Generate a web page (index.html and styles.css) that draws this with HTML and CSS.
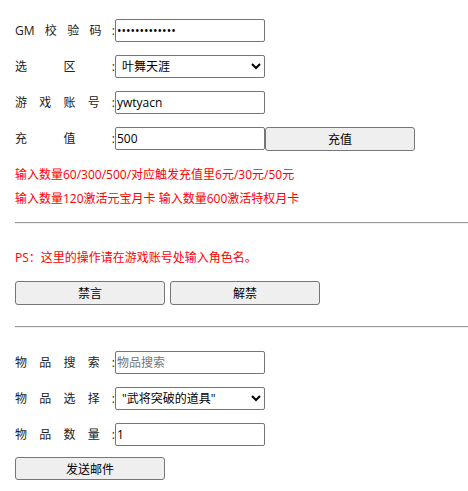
FILE: index.html
```html
<!DOCTYPE html>
<html lang="zh-CN">
<head>
  <meta charset="utf-8">
  <title>GM工具</title>
  <link rel="stylesheet" href="styles.css">
</head>
<body>
  <div class="panel">
    <!-- 充值 -->
    <div class="group">
      <div class="row">
        <label class="label">GM校验码:</label>
        <input type="password" class="field" value="1234567890123">
      </div>
      <div class="row">
        <label class="label">选区:</label>
        <select class="field">
          <option>叶舞天涯</option>
        </select>
      </div>
      <div class="row">
        <label class="label">游戏账号:</label>
        <input type="text" class="field" value="ywtyacn">
      </div>
      <div class="row">
        <label class="label">充值:</label>
        <input type="text" class="field" value="500">
        <button class="btn">充值</button>
      </div>
    </div>
    <div class="notes">
      <p>输入数量60/300/500/对应触发充值里6元/30元/50元</p>
      <p>输入数量120激活元宝月卡 输入数量600激活特权月卡</p>
    </div>
    <hr class="sep sep-first">
    <p class="ps">PS：这里的操作请在游戏账号处输入角色名。</p>
    <div class="actions">
      <button class="btn">禁言</button>
      <button class="btn">解禁</button>
    </div>
    <hr class="sep sep-second">
    <!-- 邮件 -->
    <div class="group">
      <div class="row">
        <label class="label">物品搜索:</label>
        <input type="text" class="field" placeholder="物品搜索">
      </div>
      <div class="row">
        <label class="label">物品选择:</label>
        <select class="field">
          <option>"武将突破的道具"</option>
        </select>
      </div>
      <div class="row">
        <label class="label">物品数量:</label>
        <input type="text" class="field" value="1">
      </div>
    </div>
    <div class="actions mail">
      <button class="btn">发送邮件</button>
    </div>
  </div>
</body>
</html>
```

FILE: styles.css
```css
* {
  box-sizing: border-box;
}
body {
  margin: 0;
  font-family: "Open Sans", "Noto Sans CJK SC", sans-serif;
  font-size: 12px;
  color: #000;
  background: #fff;
}
.panel {
  padding: 19px 0 0 15px;
  display: flex;
  flex-direction: column;
}
.group {
  display: flex;
  flex-direction: column;
  gap: 13px;
}
.row {
  display: flex;
  align-items: center;
  height: 23px;
}
.label {
  width: 100px;
  text-align: justify;
  text-align-last: justify;
  color: #222;
  line-height: 23px;
}
.field {
  width: 150px;
  height: 23px;
  margin: 0;
  font-family: "Open Sans", "Noto Sans CJK SC", sans-serif;
  font-size: 12px;
  padding: 1px 1px;
  border: 1px solid #767676;
  border-radius: 2px;
  color: #000;
  background: #fff;
}
select.field {
  padding: 0 2px;
}
.field::placeholder {
  color: #757575;
}
.btn {
  width: 150px;
  height: 24px;
  margin: 0;
  font-family: "Open Sans", "Noto Sans CJK SC", sans-serif;
  font-size: 12px;
  color: #000;
  background: #efefef;
  border: 1px solid #767676;
  border-radius: 3px;
}
.notes {
  margin-top: 13px;
  color: #f00;
}
.notes p,
.ps {
  margin: 0;
  line-height: 24px;
}
.sep {
  margin: 11px 0 0;
  border: 0;
  border-top: 1px solid #9a9a9a;
  border-bottom: 1px solid #eee;
  height: 0;
}
.sep-second {
  margin-top: 21px;
  margin-bottom: 23px;
}
.ps {
  margin-top: 22px;
  color: #f00;
}
.actions {
  margin-top: 11px;
  display: flex;
  gap: 5px;
}
.mail .btn {
  height: 23px;
}
```
